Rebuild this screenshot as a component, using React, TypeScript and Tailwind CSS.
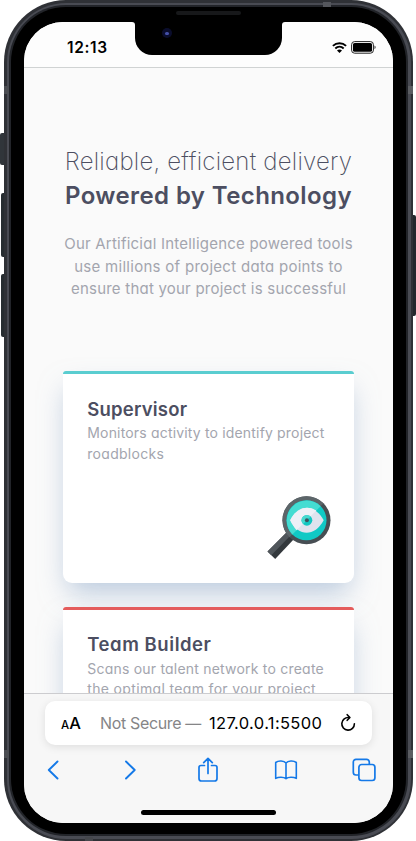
import React from "react";

function StatusBar() {
  return (
    <header className="flex h-[46px] shrink-0 items-start justify-between border-b border-[#d0d3d3] bg-[#fdfdfd] pl-[43px] pr-[17px] pt-[14px]">
      <span className="text-[15.5px] font-semibold leading-[23px] tracking-[0.650px] text-black">12:13</span>
      <div className="flex items-center gap-[4px] pt-[5px]">
        <svg width="15" height="11" viewBox="0 0 15 11" fill="none" stroke="#000" strokeWidth="1.9">
          <path d="M0.9 3.9C4.6 0.3 10.4 0.3 14.1 3.9" />
          <path d="M3.3 6.5C5.7 4.2 9.3 4.2 11.7 6.5" />
          <path d="M7.5 10.9 5 8.5C6.4 7.2 8.6 7.2 10 8.5Z" fill="#000" stroke="none" />
        </svg>
        <svg width="25" height="13" viewBox="0 0 25 13">
          <rect x="0.6" y="0.6" width="21.8" height="11.6" rx="3" fill="none" stroke="#222" strokeWidth="1" />
          <rect x="2" y="2" width="19" height="8.8" rx="1.6" fill="#000" />
          <path d="M23.5 4.6c1.5.6 1.5 3 0 3.6Z" fill="#333" />
        </svg>
      </div>
    </header>
  );
}

function EyeMagnifier() {
  return (
    <svg width="64" height="64" viewBox="0 0 64 64">
      <path d="M20 36 27 43 8.200 63 0.500 55.500Z" fill="#33383c" />
      <path d="M20 36 23.500 39.500 4.300 59.200 0.500 55.500Z" fill="#50565b" />
      <circle cx="39.500" cy="24.300" r="24" fill="#474e53" />
      <path d="M22.500 41.300A24 24 0 0 1 56.500 7.300Z" fill="#5c6569" />
      <circle cx="39.500" cy="24.300" r="20" fill="#10c9c5" />
      <path d="M25.360 38.440A20 20 0 0 1 53.640 10.160Z" fill="#44dcd2" />
      <path d="M23.200 24.300C31.500 7.500 47.500 7.500 56.700 24.300 47.500 41 31.500 41 23.200 24.300Z" fill="#dfe3ee" />
      <path d="M29.600 34.200C27 31.500 25 28 23.200 24.300 29 12.500 40 8.500 49.300 14.500Z" fill="#eef0f7" />
      <circle cx="39.900" cy="24.300" r="5.400" fill="#12c7c2" />
      <path d="M36.080 28.120A5.400 5.400 0 0 1 43.720 20.480Z" fill="#45d9d0" />
      <circle cx="39.900" cy="24.300" r="2" fill="#3c5560" />
    </svg>
  );
}

function Intro() {
  return (
    <section className="flex flex-col items-center whitespace-nowrap pt-[76.500px] text-center">
      <h1 className="text-[24px] leading-[34px] text-[#4c4e61]">
        <span className="block font-extralight tracking-[0.230px]">Reliable, efficient delivery</span>
        <span className="block font-semibold tracking-[0.400px]">Powered by Technology</span>
      </h1>
      <p className="mt-[20.500px] text-[15px] leading-[22.500px] text-[#a3a5ae]">
        <span className="block tracking-[0.220px]">Our Artificial Intelligence powered tools</span>
        <span className="block tracking-[0.290px]">use millions of project data points to</span>
        <span className="block tracking-[0.220px]">ensure that your project is successful</span>
      </p>
    </section>
  );
}

function Home() {
  return (
    <main className="h-[625px] shrink-0 overflow-hidden bg-[#fafafa]">
      <Intro />
      <div className="mx-[39.300px] mt-[70.300px] flex flex-col gap-[23.300px] whitespace-nowrap">
        <article className="flex h-[212.500px] flex-col rounded-b-[9px] rounded-t-[2px] bg-white shadow-[0_14px_28px_-5px_rgba(131,160,196,0.55)]">
          <div className="h-[3.300px] shrink-0 rounded-t-[3px] bg-[#5acdd0]" />
          <div className="pl-[24px] pr-[23px] pt-[20.500px]">
            <h2 className="text-[18.500px] font-semibold leading-[28px] tracking-[0.200px] text-[#4c4e61]">Supervisor</h2>
            <p className="pt-[0.500px] text-[14px] leading-[20.700px] text-[#a3a5ae]">
              <span className="block tracking-[0.170px]">Monitors activity to identify project</span>
              <span className="block tracking-[0.280px]">roadblocks</span>
            </p>
            <div className="mt-[31.500px] flex justify-end">
              <EyeMagnifier />
            </div>
          </div>
        </article>
        <article className="flex h-[212.500px] flex-col rounded-b-[9px] rounded-t-[2px] bg-white shadow-[0_14px_28px_-5px_rgba(131,160,196,0.55)]">
          <div className="h-[3.300px] shrink-0 rounded-t-[3px] bg-[#e45c5c]" />
          <div className="pl-[24px] pt-[20.500px]">
            <h2 className="text-[18.500px] font-semibold leading-[28px] tracking-[0.550px] text-[#4c4e61]">Team Builder</h2>
            <p className="pt-[0.500px] text-[14px] leading-[20.400px] text-[#a3a5ae]">
              <span className="block tracking-[0.210px]">Scans our talent network to create</span>
              <span className="block tracking-[0.340px]">the optimal team for your project</span>
            </p>
          </div>
        </article>
      </div>
    </main>
  );
}

function AddressBar() {
  return (
    <div className="mx-[21px] mt-[7px] flex h-[44px] items-center rounded-[10px] bg-white pl-[16px] pr-[15px] shadow-[0_2px_8px_rgba(0,0,0,0.1)]">
      <span className="w-[39px] font-medium leading-none text-black">
        <span className="text-[11.500px]">A</span>
        <span className="text-[16.500px]">A</span>
      </span>
      <span className="w-[109px] text-[16px] tracking-[-0.350px] text-[#858587]">Not Secure —</span>
      <span className="text-[16.500px] tracking-[0.350px] text-black">127.0.0.1:5500</span>
      <svg className="ml-auto" width="18" height="20" viewBox="0 0 18 20" fill="none" stroke="#000" strokeWidth="1.600" strokeLinecap="round" strokeLinejoin="round">
        <path d="M10 4.600A6.300 6.300 0 1 0 15.400 10.800" />
        <path d="M8.200 1.700 10.900 4.500 8.200 7.300" />
      </svg>
    </div>
  );
}

function Toolbar() {
  return (
    <nav className="mt-[11px] flex h-[28px] items-center justify-between pl-[15.500px] pr-[16.500px] text-[#1479e8]">
      <div className="flex w-[26px] justify-center">
        <svg width="16" height="24" viewBox="0 0 16 24" fill="none" stroke="currentColor" strokeWidth="1.900" strokeLinecap="round" strokeLinejoin="round">
          <path d="M12.500 3.500 3.800 12 12.500 20.500" />
        </svg>
      </div>
      <div className="flex w-[26px] justify-center">
        <svg width="16" height="24" viewBox="0 0 16 24" fill="none" stroke="currentColor" strokeWidth="1.900" strokeLinecap="round" strokeLinejoin="round">
          <path d="M4 3.500 12.700 12 4 20.500" />
        </svg>
      </div>
      <div className="flex w-[26px] justify-center">
        <svg width="22" height="28" viewBox="0 0 22 28" fill="none" stroke="currentColor" strokeWidth="1.700" strokeLinecap="round" strokeLinejoin="round">
          <path d="M7.500 9.500H4a2 2 0 0 0-2 2v11a2.500 2.500 0 0 0 2.500 2.500h13a2.500 2.500 0 0 0 2.500-2.500v-11a2 2 0 0 0-2-2h-3.500" />
          <path d="M11 17.500V2.500M6.700 6.700 11 2.300l4.300 4.400" />
        </svg>
      </div>
      <div className="flex w-[26px] justify-center">
        <svg width="24" height="24" viewBox="0 0 24 24" fill="none" stroke="currentColor" strokeWidth="1.600" strokeLinejoin="round">
          <path d="M12 5C10 2.600 4.500 2.300 1.700 4.500V20.400C4.500 18.700 9.800 18.800 12 20.700 14.200 18.800 19.500 18.700 22.300 20.400V4.500C19.500 2.300 14 2.600 12 5ZM12 5V20.700" />
        </svg>
      </div>
      <svg width="26" height="26" viewBox="0 0 26 26" fill="none" stroke="currentColor" strokeWidth="1.700">
        <path d="M18.300 7V5a2.700 2.700 0 0 0-2.700-2.700H5A2.700 2.700 0 0 0 2.300 5v10.300A2.700 2.700 0 0 0 5 18h2.500" />
        <rect x="7.900" y="7.500" width="16" height="16" rx="2.700" />
      </svg>
    </nav>
  );
}

function SafariChrome() {
  return (
    <footer className="flex flex-1 flex-col border-t border-[#cccccf] bg-[#f7f7f7]">
      <AddressBar />
      <Toolbar />
      <div className="ml-[117px] mt-[26px] h-[5px] w-[135px] rounded-full bg-black" />
    </footer>
  );
}

function Notch() {
  return (
    <div className="absolute left-[108px] top-0 flex text-black">
      <svg width="3" height="3" viewBox="0 0 3 3"><path d="M0 0H3V3A3 3 0 0 0 0 0Z" /></svg>
      <div className="flex h-[33px] w-[147px] rounded-b-[17px] bg-black pl-[27px] pt-[6px]">
        <div className="flex h-[10px] w-[10px] items-center justify-center rounded-full bg-[#0a0d2c]">
          <div className="h-[3px] w-[4px] rounded-full bg-[#4450a8]" />
        </div>
      </div>
      <svg width="3" height="3" viewBox="0 0 3 3"><path d="M0 0H3A3 3 0 0 0 0 3Z" /></svg>
    </div>
  );
}

export default function App() {
  return (
    <div className="relative h-[841px] w-[416px] overflow-hidden bg-white font-['Inter','Liberation_Sans',sans-serif] [font-feature-settings:'cv11']">
      <div className="absolute left-0 top-[133px] h-[32px] w-[6px] rounded-l-[2px] bg-[#30353a]" />
      <div className="absolute left-[1px] top-[193px] h-[64px] w-[5px] rounded-l-[2px] bg-[#272d31]" />
      <div className="absolute left-[1px] top-[274px] h-[63px] w-[5px] rounded-l-[2px] bg-[#272d31]" />
      <div className="absolute left-[411px] top-[215px] h-[101px] w-[5px] rounded-r-[2px] bg-[#23282d]" />
      <div className="relative ml-[4px] h-[841px] w-[409px] rounded-[62px] bg-[#2f3136] p-[2.500px]">
        <div className="h-full rounded-[59.500px] bg-[#494b53] p-[2.500px]">
          <div className="h-full rounded-[57px] bg-[#222429] p-[2px]">
            <div className="flex h-full flex-col rounded-[55px] bg-black px-[13px] pt-[15px]">
              <div className="relative flex h-[801px] w-[369px] flex-col overflow-hidden rounded-[39px] bg-[#fafafa]">
                <StatusBar />
                <Home />
                <SafariChrome />
                <Notch />
              </div>
            </div>
          </div>
        </div>
        <div className="absolute left-[172px] top-[11px] h-[4px] w-[65px] rounded-full bg-[#17181a]" />
        <div className="absolute left-0 top-[86px] h-[8px] w-[5px] bg-[#4b4d52]" />
        <div className="absolute right-0 top-[86px] h-[8px] w-[5px] bg-[#5b5d62]" />
        <div className="absolute left-0 top-[750px] h-[8px] w-[5px] bg-[#4b4d52]" />
        <div className="absolute right-0 top-[750px] h-[8px] w-[5px] bg-[#5b5d62]" />
        <div className="absolute left-[111px] top-[2px] h-[5px] w-[8px] bg-transparent" />
        <div className="absolute left-[319px] top-[2px] h-[5px] w-[8px] bg-[#54565c]" />
        <div className="absolute left-[81px] top-[837px] h-[4px] w-[8px] bg-[#45474c]" />
      </div>
    </div>
  );
}
